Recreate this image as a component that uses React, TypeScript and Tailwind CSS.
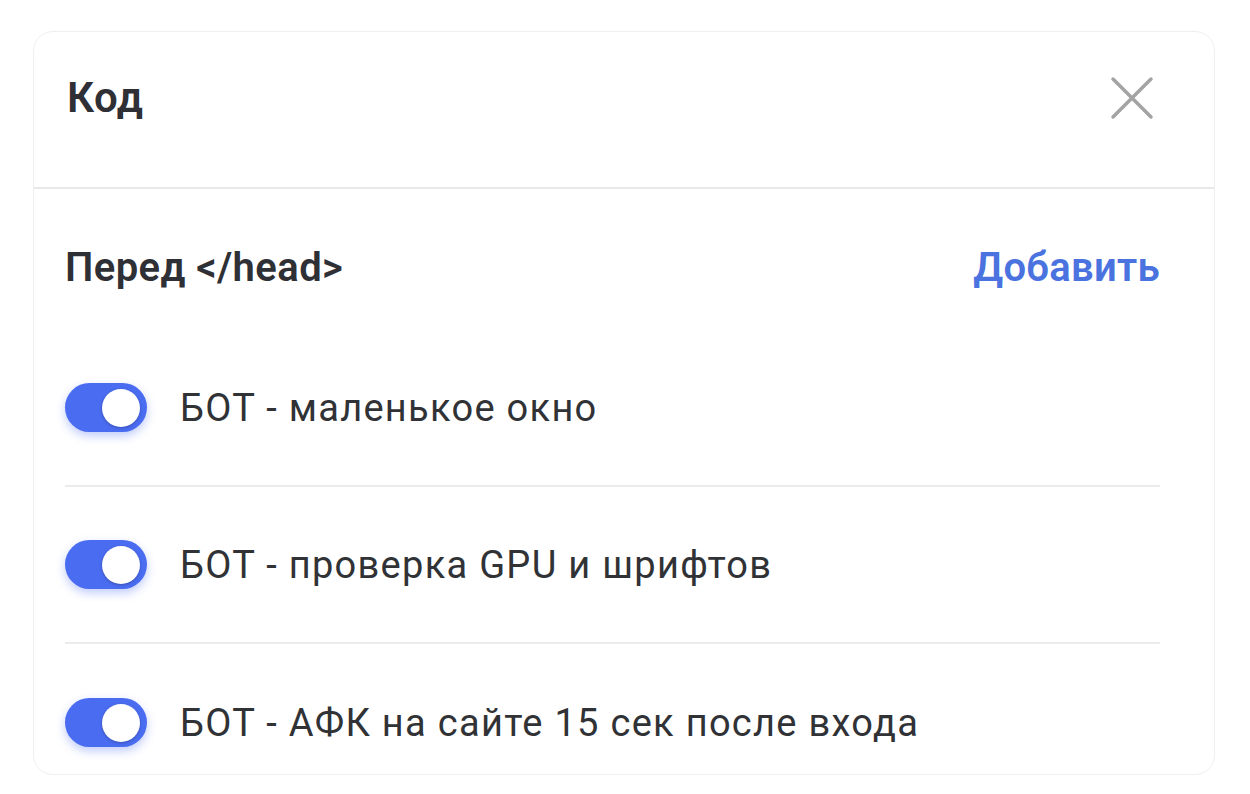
import React from "react";

function Toggle() {
  return (
    <div className="relative flex h-[49px] w-[82px] shrink-0 items-center justify-end rounded-full bg-[#4a6cf0] pr-[7px] shadow-[0_4px_10px_rgba(74,108,240,0.35)]">
      <div className="h-[38px] w-[38px] rounded-full bg-white shadow-[0_1px_3px_rgba(0,0,0,0.25)]" />
    </div>
  );
}

function Row({ label, last }: { label: string; last?: boolean }) {
  return (
    <div
      className={
        "flex h-[157px] shrink-0 items-center gap-[33px] " +
        (last ? "" : "border-b-2 border-[#ebebeb]")
      }
    >
      <Toggle />
      <span className="text-[38px] leading-none tracking-[1.3px] text-[#303236]">{label}</span>
    </div>
  );
}

export default function App() {
  return (
    <div
      className="min-h-[794px] w-[1250px] bg-white pl-[33px] pt-[31px]"
      style={{ fontFamily: "Roboto, 'Noto Sans', sans-serif" }}
    >
      <div className="flex h-[744px] w-[1182px] flex-col overflow-hidden rounded-[20px] border border-[#efefef] bg-white">
        <div className="flex h-[157px] shrink-0 items-center justify-between border-b-2 border-[#e9e9e9] pb-[24px] pl-[33px] pr-[60px]">
          <span className="text-[42px] font-semibold leading-none tracking-[0.5px] text-[#2e3035]">Код</span>
          <svg width="44" height="44" viewBox="0 0 44 44" fill="none">
            <path d="M3 3 L41 41 M41 3 L3 41" stroke="#a3a3a3" strokeWidth="3.5" strokeLinecap="round" />
          </svg>
        </div>
        <div className="flex flex-col pl-[31px] pr-[54px]">
          <div className="flex h-[141px] shrink-0 items-center justify-between pt-[17px]">
            <span className="text-[40px] font-semibold leading-none tracking-[0.4px] text-[#2e3035]">Перед &lt;/head&gt;</span>
            <span className="text-[40px] font-semibold leading-none tracking-[0.3px] text-[#4a73e0]">Добавить</span>
          </div>
          <Row label="БОТ - маленькое окно" />
          <Row label="БОТ - проверка GPU и шрифтов" />
          <Row label="БОТ - АФК на сайте 15 сек после входа" last />
        </div>
      </div>
    </div>
  );
}
